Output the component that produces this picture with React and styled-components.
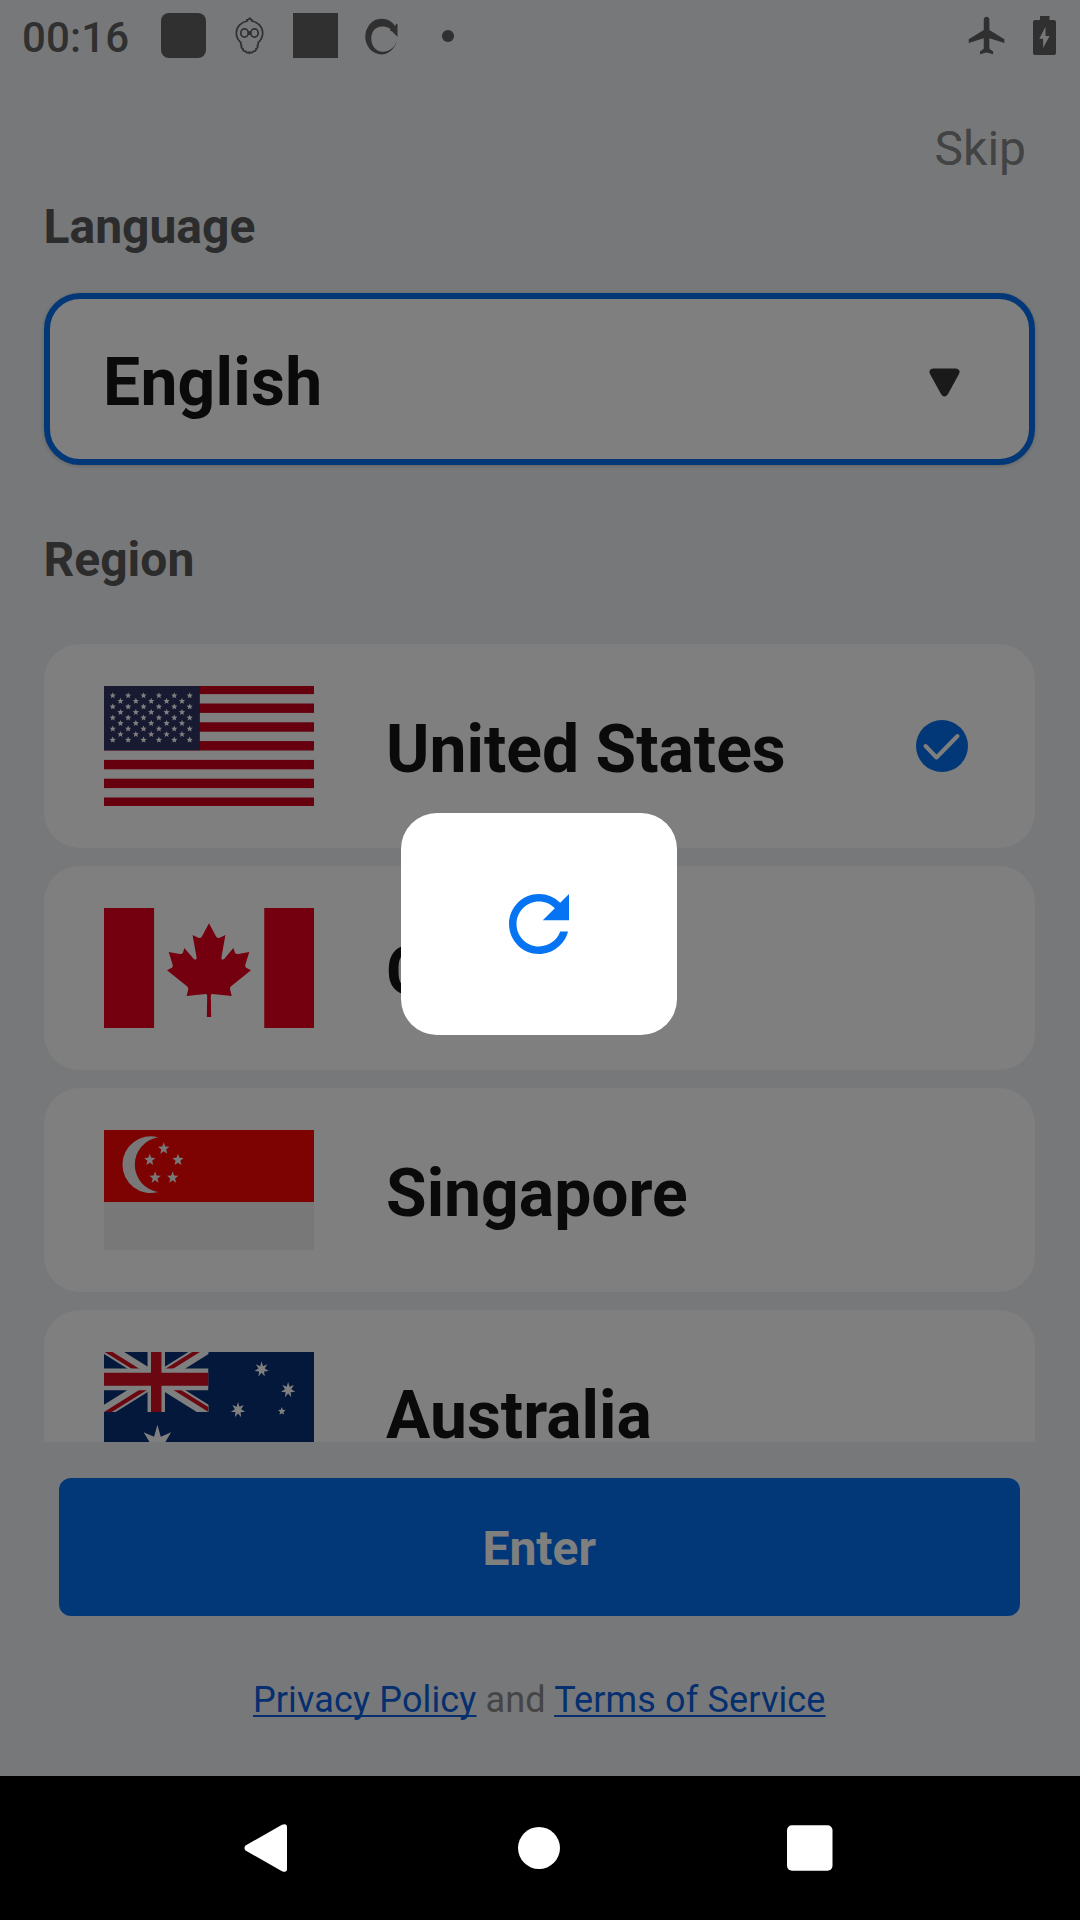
import React from "react";
import styled, { createGlobalStyle } from "styled-components";
import { MdRefresh, MdFlight } from "react-icons/md";

const GlobalStyle = createGlobalStyle`
  * { box-sizing: border-box; }
  body { margin: 0; background: #000; }
`;

const Phone = styled.div`
  position: relative;
  width: 1080px;
  height: 1920px;
  display: flex;
  flex-direction: column;
  overflow: hidden;
  font-family: Roboto, "Liberation Sans", sans-serif;
`;

const Screen = styled.main`
  height: 1776px;
  display: flex;
  flex-direction: column;
  background: #eff1f4;
`;

const StatusBar = styled.header`
  height: 72px;
  flex: none;
  display: flex;
  align-items: flex-start;
  justify-content: space-between;
  padding: 13px 18px 0 22px;
  color: #606060;
`;

const StatusGroup = styled.div`
  display: flex;
  align-items: flex-start;
  gap: ${(p) => p.$gap}px;
`;

const Clock = styled.span`
  width: 117px;
  padding-top: 2px;
  font-size: 42px;
  font-weight: 500;
  line-height: 45px;
  letter-spacing: 0.15px;
`;

const StatusIcon = styled.svg`
  display: block;
  width: ${(p) => p.$w || 45}px;
  height: 45px;
`;

const Body = styled.div`
  flex: none;
  display: flex;
  flex-direction: column;
  padding: 49px 45.5px 0 43.5px;
`;

const Skip = styled.button`
  align-self: flex-end;
  margin: 0 8.5px 22px 0;
  padding: 0;
  border: 0;
  background: none;
  font: 400 48px/56px Roboto, sans-serif;
  color: #868686;
`;

const SectionTitle = styled.h2`
  margin: 0 0 ${(p) => p.$after}px;
  font-size: 48px;
  line-height: 56px;
  font-weight: 700;
  color: #58585a;
`;

const LanguageSelect = styled.div`
  height: 172px;
  margin-bottom: 67px;
  padding: 0 68.5px 0 53.5px;
  display: flex;
  align-items: center;
  justify-content: space-between;
  border: 6px solid #0571f0;
  border-radius: 36px;
  background: #fff;
  box-shadow: 0 1px 4px rgba(0, 0, 0, 0.2);
`;

const DropdownArrow = styled.svg`
  width: 31px;
  height: 29px;
  margin-top: 6px;
`;

const Label = styled.span`
  padding-top: 7px;
  font-size: 66px;
  line-height: 78px;
  font-weight: 700;
  color: #141416;
`;

const LanguageLabel = styled(Label)`
  letter-spacing: 0.25px;
`;

const RegionList = styled.ul`
  height: 798px;
  margin: 0;
  padding: 0;
  display: flex;
  flex-direction: column;
  gap: 18px;
  overflow: hidden;
  list-style: none;
`;

const RegionRow = styled.li`
  flex: none;
  height: 204px;
  display: flex;
  align-items: center;
  gap: 72.5px;
  padding: 0 66.5px 0 60px;
  border-radius: 36px;
  background: #fff;
`;

const FlagSvg = styled.svg.attrs({ preserveAspectRatio: "none" })`
  display: block;
  width: 210px;
  height: 120px;
`;

const CheckSvg = styled.svg`
  width: 52px;
  height: 52px;
  margin-left: auto;
`;

const Footer = styled.footer`
  display: flex;
  flex-direction: column;
  padding: 36px 60px 0 58.5px;
`;

const EnterButton = styled.button`
  height: 138px;
  margin-bottom: 62px;
  padding: 3px 0 0;
  border: 0;
  border-radius: 12px;
  background: #0571f0;
  color: #fff;
  font: 700 48px/56px Roboto, sans-serif;
`;

const Legal = styled.p`
  margin: 0;
  text-align: center;
  font-size: 36px;
  line-height: 44px;
  letter-spacing: 0.14px;
  color: #8a8a8a;
`;

const LegalLink = styled.a`
  color: #0a5fdc;
  text-decoration: underline;
  text-decoration-thickness: 2px;
  text-underline-offset: 3px;
  text-decoration-skip-ink: none;
`;

const Scrim = styled.div`
  position: absolute;
  inset: 0 0 144px 0;
  display: flex;
  justify-content: center;
  padding: 813px 2px 0 0;
  background: rgba(0, 0, 0, 0.5);
`;

const LoadingCard = styled.div`
  width: 276px;
  height: 222px;
  display: flex;
  align-items: center;
  justify-content: center;
  border-radius: 36px;
  background: #fff;
  color: #0573f2;
`;

const NavBar = styled.nav`
  height: 144px;
  display: flex;
  align-items: center;
  justify-content: center;
  gap: 223px;
  padding-right: 2px;
  background: #000;
`;

const NavIcon = styled.svg`
  width: 48px;
  height: 48px;
  fill: #fff;
`;

function starPath(cx, cy, rx, ry, points, ratio) {
  let d = "";
  for (let i = 0; i < points * 2; i++) {
    const k = i % 2 ? ratio : 1;
    const a = (Math.PI * i) / points;
    d += `${i ? "L" : "M"}${(cx + rx * k * Math.sin(a)).toFixed(2)} ${(cy - ry * k * Math.cos(a)).toFixed(2)}`;
  }
  return d + "Z";
}

function UnitedStatesFlag() {
  const stars = [];
  for (let row = 0; row < 9; row++) {
    const odd = row % 2;
    for (let col = 0; col < (odd ? 5 : 6); col++) {
      stars.push(starPath(8.8 + (odd ? 7.73 : 0) + col * 15.46, 9.6 + row * 5.54, 3.3, 3.3, 5, 0.45));
    }
  }
  return (
    <FlagSvg viewBox="0 0 211 120">
      <rect width="211" height="120" fill="#fff" />
      {[0, 1, 2, 3, 4, 5, 6].map((i) => (
        <rect key={i} y={-1.3 + i * 18.8} width="211" height="9.4" fill="#cc001c" />
      ))}
      <rect width="96.3" height="64.3" fill="#2f3561" />
      <path d={stars.join("")} fill="#fff" />
    </FlagSvg>
  );
}

function CanadaFlag() {
  return (
    <FlagSvg viewBox="219 144 633 360">
      <path d="M219 144H370V504H219ZM702 144H852V504H702Z" fill="#e8001e" />
      <path
        d="M535.5 190L556 228Q560 236 568 233L585 225L573 292Q572 304 582 296L609 264L614 278Q616 283 624 282L657 276L645 314Q643 321 649 324L662 331L602 379Q597 383 599 388L604 408L546 402Q540 402 541 408L542 471H529L530 408Q531 402 525 402L468 408L473 388Q474 383 469 379L409 331L422 324Q428 321 426 314L414 276L447 282Q455 283 457 278L461 264L489 296Q499 304 498 292L486 225L503 233Q511 236 515 228Z"
        fill="#e8001e"
      />
    </FlagSvg>
  );
}

function SingaporeFlag() {
  const stars = [[399, 206], [357, 240], [442, 240], [373, 293], [426, 293]];
  return (
    <FlagSvg viewBox="219 150 633 360">
      <rect x="219" y="150" width="633" height="360" fill="#f0f0f0" />
      <rect x="219" y="150" width="633" height="216" fill="#fa0605" />
      <path d="M382 172A85 85 0 1 0 382 336A83 83 0 0 1 382 172Z" fill="#f0f0f0" />
      <path d={stars.map(([x, y]) => starPath(x, y, 18, 19, 5, 0.42)).join("")} fill="#f0f0f0" />
    </FlagSvg>
  );
}

function AustraliaFlag() {
  const stars = [
    starPath(694, 208, 22, 24, 7, 0.44),
    starPath(774, 270, 22, 24, 7, 0.44),
    starPath(623, 330, 22, 24, 7, 0.44),
    starPath(755, 334, 12, 13, 5, 0.45),
    starPath(380, 434, 53, 60, 7, 0.44),
  ];
  return (
    <FlagSvg viewBox="219 156 633 360">
      <rect x="219" y="156" width="633" height="360" fill="#083077" />
      <svg x="219" y="140" width="315" height="196" viewBox="0 0 60 30" preserveAspectRatio="none">
        <clipPath id="saltire">
          <path d="M30 15H60V30ZM30 15V30H0ZM30 15H0V0ZM30 15V0H60Z" />
        </clipPath>
        <path d="M0 0L60 30M60 0L0 30" stroke="#fff" strokeWidth="6" />
        <path d="M0 0L60 30M60 0L0 30" clipPath="url(#saltire)" stroke="#d40f20" strokeWidth="4" />
        <path d="M30 0V30M0 15H60" stroke="#fff" strokeWidth="10" />
        <path d="M30 0V30M0 15H60" stroke="#d40f20" strokeWidth="6" />
      </svg>
      <path d={stars.join("")} fill="#fff" />
    </FlagSvg>
  );
}

const regions = [
  { name: "United States", Flag: UnitedStatesFlag, selected: true },
  { name: "Canada", Flag: CanadaFlag },
  { name: "Singapore", Flag: SingaporeFlag },
  { name: "Australia", Flag: AustraliaFlag },
];

function StatusIcons() {
  return (
    <StatusGroup $gap={21}>
      <StatusIcon viewBox="0 0 45 45">
        <rect width="45" height="45" rx="8" fill="currentColor" />
      </StatusIcon>
      <StatusIcon viewBox="227.5 13 45 45" fill="none" stroke="currentColor" strokeWidth="1.7" strokeLinejoin="round">
        <path d="M248 21C246.500 20 248 19 249.500 19.300C249.500 18 250.500 17.800 251 19C252.500 19.300 253 20.300 252 21C258 22 263.200 26.500 263.200 33C263.200 38 261 40.500 258.500 42.800C259 44 259 45 257.800 45.500C258.600 47 258 48.500 256.500 48.700C256.800 50.500 255.500 51.600 254 51.100C253.500 52.800 252 53 250.800 52.200L250 53.300L249.200 52.200C248 53 246.500 52.800 246 51.100C244.500 51.600 243.200 50.500 243.500 48.700C242 48.500 241.400 47 242.200 45.500C241 45 241 44 241.500 42.800C239 40.500 236.800 38 236.800 33C236.800 26.500 242 22 248 21Z" />
        <ellipse cx="245" cy="33" rx="3.700" ry="4.100" />
        <ellipse cx="255" cy="33" rx="3.700" ry="4.100" />
        <path d="M248.700 33H251.300M249 31.500L251 34.500M251 31.500L249 34.500" />
      </StatusIcon>
      <StatusIcon viewBox="0 0 45 45">
        <rect width="45" height="45" fill="currentColor" />
      </StatusIcon>
      <StatusIcon viewBox="359.5 13 45 45">
        <path
          fill="currentColor"
          d="M397.5 41C395 49 389 54.500 382 54.500A16.500 18 0 0 1 365.700 36.500A16.500 18 0 0 1 395.500 26L397 23.500L398 24.500V37L393 31.800L390.500 30.500L391 28.800C388 27 385.500 26.500 383 26.500C375.500 26.500 371.800 32 371.800 38.500C371.800 46 376.500 51.800 383.500 51.800C390 51.800 395 47.500 397.500 41Z"
        />
      </StatusIcon>
      <StatusIcon viewBox="0 0 45 45">
        <circle cx="23" cy="23" r="6.1" fill="currentColor" />
      </StatusIcon>
    </StatusGroup>
  );
}

function LoadingOverlay() {
  return (
    <Scrim>
      <LoadingCard>
        <MdRefresh size={90} />
      </LoadingCard>
    </Scrim>
  );
}

export default function App() {
  return (
    <>
      <GlobalStyle />
      <Phone>
        <Screen>
          <StatusBar>
            <StatusGroup $gap={21.5}>
              <Clock>00:16</Clock>
              <StatusIcons />
            </StatusGroup>
            <StatusGroup $gap={12}>
              <MdFlight size={45} />
              <StatusIcon $w={40} viewBox="1022 13 40 45">
                <path
                  fill="currentColor"
                  fillRule="evenodd"
                  d="M1040 16H1049.5V20H1054Q1056 20 1056 22V53Q1056 55 1054 55H1035Q1033 55 1033 53V22Q1033 20 1035 20H1040ZM1045.5 26.7L1039.3 38.7H1043.1V48L1049.6 36H1045.5Z"
                />
              </StatusIcon>
            </StatusGroup>
          </StatusBar>
          <Body>
            <Skip>Skip</Skip>
            <SectionTitle $after={38}>Language</SectionTitle>
            <LanguageSelect>
              <LanguageLabel>English</LanguageLabel>
              <DropdownArrow viewBox="0 0 31 29">
                <path d="M4 0.5H27Q32 1.5 30 6L19 26Q15.500 31 12 26L1 6Q-1 1.500 4 0.500Z" fill="#343436" />
              </DropdownArrow>
            </LanguageSelect>
            <SectionTitle $after={56}>Region</SectionTitle>
            <RegionList>
              {regions.map(({ name, Flag, selected }) => (
                <RegionRow key={name}>
                  <Flag />
                  <Label>{name}</Label>
                  {selected && (
                    <CheckSvg viewBox="0 0 52 52">
                      <circle cx="26" cy="26" r="26" fill="#0571f0" />
                      <path d="M9.500 26L20.500 37.500L41.500 16" fill="none" stroke="#fff" strokeWidth="4" strokeLinecap="round" strokeLinejoin="round" />
                    </CheckSvg>
                  )}
                </RegionRow>
              ))}
            </RegionList>
          </Body>
          <Footer>
            <EnterButton>Enter</EnterButton>
            <Legal>
              <LegalLink>Privacy Policy</LegalLink> and <LegalLink>Terms of Service</LegalLink>
            </Legal>
          </Footer>
        </Screen>
        <LoadingOverlay />
        <NavBar>
          <NavIcon viewBox="0 0 48 48">
            <path d="M1.500 21.500L38 0.800Q43 -1 43 3V45Q43 49 38 47.200L1.500 26.500Q-0.500 24 1.500 21.500Z" />
          </NavIcon>
          <NavIcon viewBox="0 0 48 48">
            <circle cx="24" cy="24" r="21" />
          </NavIcon>
          <NavIcon viewBox="0 0 48 48">
            <rect x="1" y="1.300" width="45.500" height="45.500" rx="5" />
          </NavIcon>
        </NavBar>
      </Phone>
    </>
  );
}
